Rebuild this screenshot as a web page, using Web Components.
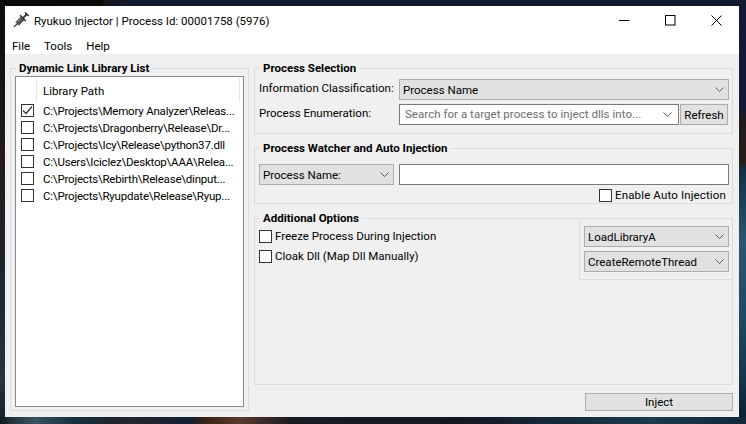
<!DOCTYPE html>
<html>
<head>
<meta charset="utf-8">
<title>Ryukuo Injector</title>
<style>
    html, body{
        margin: 0;
        height: 100%;
    }
</style>
</head>
<body>
<ryu-desktop>
    <ryu-window>
        <ryu-titlebar>Ryukuo Injector | Process Id: 00001758 (5976)</ryu-titlebar>
        <ryu-menubar>
            <span>File</span>
            <span>Tools</span>
            <span>Help</span>
        </ryu-menubar>
        <ryu-main>
            <ryu-group slot='left' label='Dynamic Link Library List' class='fill'>
                <ryu-list>
                    <ryu-row checked>C:\Projects\Memory Analyzer\Releas...</ryu-row>
                    <ryu-row>C:\Projects\Dragonberry\Release\Dr...</ryu-row>
                    <ryu-row>C:\Projects\Icy\Release\python37.dll</ryu-row>
                    <ryu-row>C:\Users\Iciclez\Desktop\AAA\Relea...</ryu-row>
                    <ryu-row>C:\Projects\Rebirth\Release\dinput...</ryu-row>
                    <ryu-row>C:\Projects\Ryupdate\Release\Ryup...</ryu-row>
                </ryu-list>
            </ryu-group>
            <ryu-group slot='right' label='Process Selection' height='74'>
                <ryu-selection></ryu-selection>
            </ryu-group>
            <ryu-group slot='right' label='Process Watcher and Auto Injection' height='64'>
                <ryu-watcher></ryu-watcher>
            </ryu-group>
            <ryu-group slot='right' label='Additional Options' class='fill' flush>
                <ryu-options></ryu-options>
            </ryu-group>
            <ryu-button slot='action'>Inject</ryu-button>
        </ryu-main>
    </ryu-window>
</ryu-desktop>

<script>
const UI_FONT = `Roboto, "Noto Sans", sans-serif`;
const CHEVRON = `<svg width='9' height='5' viewBox='0 0 9 5'><path d='M.5 .5 L4.5 4.5 L8.5 .5' fill='none' stroke='#5a5a5a' stroke-width='1'/></svg>`;

class RyuDesktop extends HTMLElement {
    constructor(){
        super();
        this.attachShadow({mode: 'open'});
        this.shadowRoot.innerHTML = `
            <style>
                :host{
                    display: block;
                    box-sizing: border-box;
                    width: 746px;
                    height: 424px;
                    padding: 6px 7px 7px 5px;
                    overflow: hidden;
                    font: 11.5px/16px ${UI_FONT};
                    color: #000;
                    background:
                        linear-gradient(90deg, #0c0a0c 0, #0b0908 100px, #17161c 106px, transparent 125px) 0 0 / 100% 6px no-repeat,
                        linear-gradient(90deg, #0f1a20 0, #2a3a44 15px, #39505e 35px, #17303f 75px, #20242c 110px, #23262e 135px, #122033 190px, #3a2218 205px, #5a3a2c 240px, #1a1c24 290px, #131722 460px, #162a3a 560px, #1b3a4a 650px, #10283a 746px) 0 417px / 100% 7px no-repeat,
                        linear-gradient(180deg, #0f1a33 0, #101c36 105px, #1f1b20 120px, #2a1c18 160px, #123044 170px, #2a5570 240px, #1c4a62 320px, #15344a 380px, #0c1c2c 424px) 739px 0 / 7px 100% no-repeat,
                        linear-gradient(180deg, #0b0a0c 0, #241a20 160px, #1c2730 280px, #26343c 380px, #131c24 424px) 0 0 / 5px 100% no-repeat,
                        #101a2c;
                }
            </style>
            <slot></slot>
        `;
    }
}

class RyuWindow extends HTMLElement {
    constructor(){
        super();
        this.attachShadow({mode: 'open'});
        this.shadowRoot.innerHTML = `
            <style>
                :host{
                    display: flex;
                    flex-direction: column;
                    width: 734px;
                    height: 411px;
                    background-color: #f0f0f0;
                }
            </style>
            <slot></slot>
        `;
    }
}

class RyuTitlebar extends HTMLElement {
    constructor(){
        super();
        this.attachShadow({mode: 'open'});
        this.shadowRoot.innerHTML = `
            <style>
                :host{
                    display: flex;
                    align-items: center;
                    height: 30px;
                    background-color: #fff;
                    padding-left: 8px;
                }
                .title{
                    flex: 1;
                    margin-left: 5px;
                }
                .icon{
                    margin-bottom: 2px;
                }
                .caption{
                    width: 46px;
                    height: 29px;
                    margin-bottom: 1px;
                    display: flex;
                    align-items: center;
                    justify-content: center;
                }
            </style>
            <svg class='icon' width='16' height='16' viewBox='0 0 16 16'>
                <path d='M.8 15.2 L4 12' stroke='#333' stroke-width='1.1'/>
                <path d='M2.2 10.2 L5.8 13.8 L11.8 7.8 L8.2 4.2 Z' fill='#555'/>
                <path d='M3.8 10.6 L8.8 5.6' stroke='#8a8a8a' stroke-width='1'/>
                <path d='M7 3.2 L12.8 9' stroke='#2a2a2a' stroke-width='1.3'/>
                <path d='M10 6 L14 2' stroke='#3a3a3a' stroke-width='1.8'/>
                <path d='M12 .4 L15.6 4' stroke='#2a2a2a' stroke-width='1.5'/>
            </svg>
            <div class='title'><slot></slot></div>
            <div class='caption'><svg width='11' height='11' viewBox='0 0 11 11'><path d='M0 5.5 H10.5' stroke='#000'/></svg></div>
            <div class='caption'><svg width='11' height='11' viewBox='0 0 11 11'><rect x='.5' y='.5' width='9.5' height='9.5' fill='none' stroke='#000'/></svg></div>
            <div class='caption'><svg width='11' height='11' viewBox='0 0 11 11'><path d='M.5 .5 L10.5 10.5 M10.5 .5 L.5 10.5' fill='none' stroke='#000'/></svg></div>
        `;
    }
}

class RyuMenubar extends HTMLElement {
    constructor(){
        super();
        this.attachShadow({mode: 'open'});
        this.shadowRoot.innerHTML = `
            <style>
                :host{
                    display: flex;
                    align-items: center;
                    column-gap: 14px;
                    height: 18px;
                    padding: 1px 0 0 7px;
                    box-sizing: border-box;
                    background-color: #fff;
                }
            </style>
            <slot></slot>
        `;
    }
}

class RyuMain extends HTMLElement {
    constructor(){
        super();
        this.attachShadow({mode: 'open'});
        this.shadowRoot.innerHTML = `
            <style>
                :host{
                    flex: 1;
                    display: grid;
                    grid-template-columns: 239px 1fr;
                    column-gap: 5px;
                    padding: 6px 6px 6px 5px;
                    min-height: 0;
                }
                .left, .right{
                    display: flex;
                    flex-direction: column;
                    min-height: 0;
                }
                .right{
                    row-gap: 6px;
                }
                .action{
                    display: flex;
                    justify-content: flex-end;
                    margin-top: 2px;
                }
            </style>
            <div class='left'><slot name='left'></slot></div>
            <div class='right'>
                <slot name='right'></slot>
                <div class='action'><slot name='action'></slot></div>
            </div>
        `;
    }
}

class RyuGroup extends HTMLElement {
    constructor(){
        super();
        this.attachShadow({mode: 'open'});
        const height = this.getAttribute('height');
        const fill = this.classList.contains('fill');
        const flush = this.hasAttribute('flush');
        const padding = flush ? '0' : (this.getAttribute('slot') == 'left' ? '0 4px 3px' : '0 3px 0 4px');
        this.shadowRoot.innerHTML = `
            <style>
                :host{
                    display: block;
                    ${fill ? 'flex: 1; min-height: 0;' : ''}
                    ${height ? `height: ${height}px; flex-shrink: 0;` : ''}
                }
                fieldset{
                    box-sizing: border-box;
                    height: 100%;
                    margin: 0;
                    min-width: 0;
                    padding: ${padding};
                    border: 1px solid #dcdcdc;
                    display: flex;
                    flex-direction: column;
                }
                legend{
                    margin-left: ${flush ? 5 : 1}px;
                    padding: 0 3px;
                    font-weight: 700;
                    line-height: 16px;
                }
            </style>
            <fieldset>
                <legend>${this.getAttribute('label')}</legend>
                <slot></slot>
            </fieldset>
        `;
    }
}

class RyuList extends HTMLElement {
    constructor(){
        super();
        this.attachShadow({mode: 'open'});
        this.shadowRoot.innerHTML = `
            <style>
                :host{
                    flex: 1;
                    display: block;
                    box-sizing: border-box;
                    background-color: #fff;
                    border: 1px solid #8a8a94;
                    min-height: 0;
                }
                .header{
                    display: flex;
                    height: 25px;
                    box-sizing: border-box;
                    padding-top: 1px;
                }
                .check-col{
                    width: 20px;
                    border-right: 1px solid #e5e5e5;
                }
                .path-col{
                    flex: 1;
                    padding: 2px 0 0 6px;
                    height: 22px;
                    line-height: 23px;
                    border-right: 1px solid #e5e5e5;
                    margin-right: 3px;
                }
            </style>
            <div class='header'>
                <div class='check-col'></div>
                <div class='path-col'>Library Path</div>
            </div>
            <slot></slot>
        `;
    }
}

class RyuCheck extends HTMLElement {
    constructor(){
        super();
        this.attachShadow({mode: 'open'});
        const tick = this.hasAttribute('checked')
            ? `<svg width='11' height='11' viewBox='0 0 11 11'><path d='M1 5.5 L4 8.5 L10 1.5' fill='none' stroke='#333' stroke-width='1.2'/></svg>`
            : '';
        this.shadowRoot.innerHTML = `
            <style>
                :host{
                    display: flex;
                    align-items: center;
                    column-gap: 3px;
                }
                .box{
                    box-sizing: border-box;
                    width: 13px;
                    height: 13px;
                    flex-shrink: 0;
                    border: 1px solid #333;
                    background-color: #fff;
                    display: flex;
                    align-items: center;
                    justify-content: center;
                }
            </style>
            <div class='box'>${tick}</div>
            <slot></slot>
        `;
    }
}

class RyuRow extends HTMLElement {
    constructor(){
        super();
        this.attachShadow({mode: 'open'});
        this.shadowRoot.innerHTML = `
            <style>
                :host{
                    display: flex;
                    align-items: center;
                    height: 17px;
                    padding-left: 5px;
                    white-space: nowrap;
                    letter-spacing: -.2px;
                }
                span{
                    margin-left: 9px;
                }
            </style>
            <ryu-check ${this.hasAttribute('checked') ? 'checked' : ''}></ryu-check>
            <span><slot></slot></span>
        `;
    }
}

class RyuCombo extends HTMLElement {
    constructor(){
        super();
        this.attachShadow({mode: 'open'});
        this.shadowRoot.innerHTML = `
            <style>
                :host{
                    display: flex;
                    align-items: center;
                    justify-content: space-between;
                    box-sizing: border-box;
                    height: 21px;
                    padding: 0 3px 0 3px;
                    background-color: #e1e1e1;
                    border: 1px solid #adadad;
                    white-space: nowrap;
                }
                :host([editable]){
                    background-color: #fff;
                    border-color: #7a7a7a;
                    color: #6d6d6d;
                    padding-left: 5px;
                    padding-right: 5px;
                    padding-bottom: 1px;
                    letter-spacing: .04px;
                }
                svg{
                    margin-right: 1px;
                }
            </style>
            <span><slot></slot></span>
            ${CHEVRON}
        `;
    }
}

class RyuField extends HTMLElement {
    constructor(){
        super();
        this.attachShadow({mode: 'open'});
        this.shadowRoot.innerHTML = `
            <style>
                :host{
                    display: block;
                    box-sizing: border-box;
                    height: 21px;
                    background-color: #fff;
                    border: 1px solid #7a7a7a;
                }
            </style>
        `;
    }
}

class RyuButton extends HTMLElement {
    constructor(){
        super();
        this.attachShadow({mode: 'open'});
        this.shadowRoot.innerHTML = `
            <style>
                :host{
                    display: flex;
                    align-items: center;
                    justify-content: center;
                    box-sizing: border-box;
                    width: 148px;
                    height: 18px;
                    background-color: #e1e1e1;
                    border: 1px solid #adadad;
                }
                :host(.refresh){
                    width: 48px;
                    height: 21px;
                }
            </style>
            <slot></slot>
        `;
    }
}

class RyuSelection extends HTMLElement {
    constructor(){
        super();
        this.attachShadow({mode: 'open'});
        this.shadowRoot.innerHTML = `
            <style>
                :host{
                    display: grid;
                    grid-template-columns: 140px 1fr;
                    row-gap: 4px;
                    padding-top: 3px;
                }
                .label{
                    line-height: 19px;
                    white-space: nowrap;
                }
                .search{
                    display: flex;
                    column-gap: 1px;
                    padding-right: 1px;
                }
                .search ryu-combo{
                    flex: 1;
                }
            </style>
            <div class='label'>Information Classification:</div>
            <ryu-combo>Process Name</ryu-combo>
            <div class='label'>Process Enumeration:</div>
            <div class='search'>
                <ryu-combo editable>Search for a target process to inject dlls into...</ryu-combo>
                <ryu-button class='refresh'>Refresh</ryu-button>
            </div>
        `;
    }
}

class RyuWatcher extends HTMLElement {
    constructor(){
        super();
        this.attachShadow({mode: 'open'});
        this.shadowRoot.innerHTML = `
            <style>
                :host{
                    display: grid;
                    grid-template-columns: 135px 1fr;
                    column-gap: 5px;
                    row-gap: 2px;
                    padding-top: 8px;
                }
                ryu-check{
                    grid-column: 1 / 3;
                    justify-content: flex-end;
                    padding-right: 3px;
                    letter-spacing: .14px;
                }
            </style>
            <ryu-combo>Process Name:</ryu-combo>
            <ryu-field></ryu-field>
            <ryu-check>Enable Auto Injection</ryu-check>
        `;
    }
}

class RyuOptions extends HTMLElement {
    constructor(){
        super();
        this.attachShadow({mode: 'open'});
        this.shadowRoot.innerHTML = `
            <style>
                :host{
                    display: flex;
                    justify-content: space-between;
                    align-items: flex-start;
                }
                .checks{
                    display: flex;
                    flex-direction: column;
                    row-gap: 4px;
                    padding: 2px 0 0 4px;
                }
                .apis{
                    box-sizing: border-box;
                    width: 153px;
                    margin-top: -8px;
                    padding: 8px 3px 7px 4px;
                    display: flex;
                    flex-direction: column;
                    row-gap: 4px;
                    border-left: 1px solid #dcdcdc;
                    border-bottom: 1px solid #dcdcdc;
                }
            </style>
            <div class='checks'>
                <ryu-check>Freeze Process During Injection</ryu-check>
                <ryu-check>Cloak Dll (Map Dll Manually)</ryu-check>
            </div>
            <div class='apis'>
                <ryu-combo>LoadLibraryA</ryu-combo>
                <ryu-combo>CreateRemoteThread</ryu-combo>
            </div>
        `;
    }
}

customElements.define('ryu-desktop', RyuDesktop);
customElements.define('ryu-window', RyuWindow);
customElements.define('ryu-titlebar', RyuTitlebar);
customElements.define('ryu-menubar', RyuMenubar);
customElements.define('ryu-main', RyuMain);
customElements.define('ryu-group', RyuGroup);
customElements.define('ryu-list', RyuList);
customElements.define('ryu-check', RyuCheck);
customElements.define('ryu-row', RyuRow);
customElements.define('ryu-combo', RyuCombo);
customElements.define('ryu-field', RyuField);
customElements.define('ryu-button', RyuButton);
customElements.define('ryu-selection', RyuSelection);
customElements.define('ryu-watcher', RyuWatcher);
customElements.define('ryu-options', RyuOptions);
</script>
</body>
</html>
